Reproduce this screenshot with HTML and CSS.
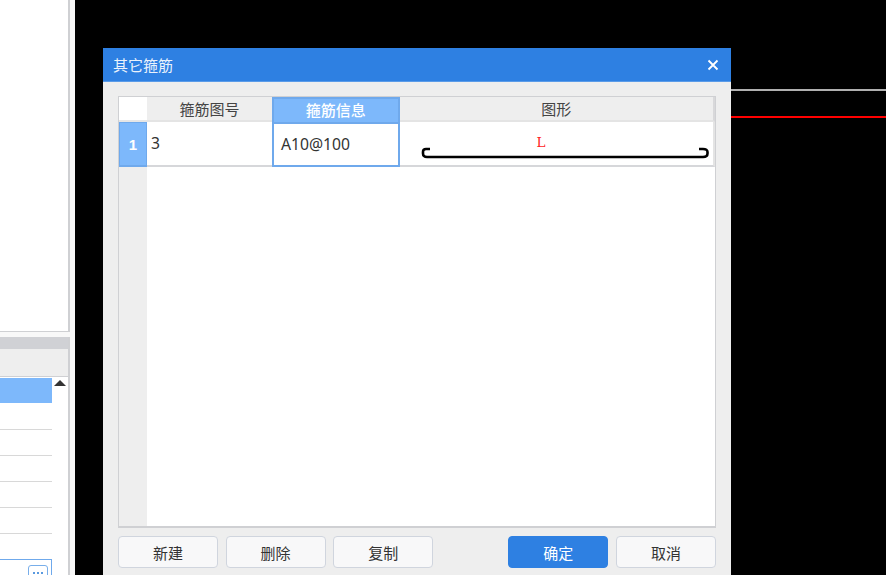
FILE: index.html
```html
<!DOCTYPE html>
<html lang="zh">
<head>
<meta charset="utf-8">
<title>其它箍筋</title>
<link rel="stylesheet" href="styles.css">
</head>
<body>
<div class="app">
  <aside class="side">
    <div class="side-top"></div>
    <div class="side-bottom">
      <div class="side-title"></div>
      <div class="side-head"></div>
      <div class="side-body">
        <div class="side-list">
          <div class="side-row side-row-active"></div>
          <div class="side-row"></div>
          <div class="side-row"></div>
          <div class="side-row"></div>
          <div class="side-row"></div>
          <div class="side-row"></div>
          <div class="side-row side-row-plain"></div>
          <div class="side-edit"><span class="more"><i class="dot"></i><i class="dot"></i><i class="dot"></i></span></div>
        </div>
        <div class="side-scroll"><span class="arrow-up"></span></div>
      </div>
    </div>
  </aside>
  <main class="canvas">
    <div class="cad-line cad-gray"></div>
    <div class="cad-line cad-red"></div>
    <section class="dialog">
      <header class="title-bar">
        <span class="title">其它箍筋</span>
        <svg class="close" width="12" height="12" viewBox="0 0 12 12"><path d="M1.500 1.500l9 9M10.500 1.500l-9 9" stroke="#fff" stroke-width="1.800" fill="none"/></svg>
      </header>
      <div class="dialog-body">
        <div class="grid">
          <div class="corner"></div>
          <div class="th">箍筋图号</div>
          <div class="th th-active">箍筋信息</div>
          <div class="th th-last">图形</div>
          <div class="row-no">1</div>
          <div class="td">3</div>
          <div class="td td-active">A10@100</div>
          <div class="td td-shape">
            <span class="shape-label">L</span>
            <svg class="shape" width="290" height="14" viewBox="0 0 290 14"><path d="M9 2H5Q2 2 2 5V6.500Q2 10 6 10H282Q286.500 10 286.500 6.500V5Q286.500 2 282 2H278" stroke="#000" stroke-width="2.600" fill="none"/></svg>
          </div>
          <div class="filler-head"></div>
          <div class="filler"></div>
        </div>
        <div class="actions">
          <button class="btn">新建</button>
          <button class="btn">删除</button>
          <button class="btn">复制</button>
          <span class="spacer"></span>
          <button class="btn btn-primary">确定</button>
          <button class="btn">取消</button>
        </div>
      </div>
    </section>
  </main>
</div>
</body>
</html>
```
FILE: styles.css
```css
* { box-sizing: border-box; }
html, body { margin: 0; height: 100%; overflow: hidden; background: #000; }
body { font-family: "Noto Sans CJK SC", "Liberation Sans", sans-serif; font-size: 15px; color: #333; }
.app { display: flex; width: 886px; height: 575px; }

.side { width: 75px; height: 575px; flex: none; background: #f8f8f8; display: flex; flex-direction: column; padding-right: 5px; }
.side-top { height: 332px; flex: none; background: #fff; border-right: 2px solid #cfd0d3; border-bottom: 1px solid #cfd0d3; }
.side-bottom { flex: 1 1 0; min-height: 0; overflow: hidden; margin-top: 5px; display: flex; flex-direction: column; border-right: 2px solid #cfd0d3; }
.side-title { height: 12px; flex: none; background: #d0d1d5; }
.side-head { height: 28px; flex: none; background: #eeeeee; border-bottom: 1px solid #cfd0d3; }
.side-body { flex: none; height: 198px; display: flex; background: #fff; }
.side-list { width: 52px; flex: none; display: flex; flex-direction: column; }
.side-row { height: 26px; flex: none; border-bottom: 1px solid #d8d8d8; }
.side-row-active { height: 25px; margin: 1px 0; background: #7db8fb; border-bottom: 0; }
.side-row-plain { border-bottom: 0; height: 25px; }
.side-edit { flex: none; height: 30px; border: 1px solid #6fa9ec; border-left: 0; display: flex; justify-content: flex-end; align-items: flex-start; padding: 5px 3px 0 0; }
.more { width: 20px; height: 16px; border: 1px solid #78aeea; border-radius: 3px; display: flex; align-items: center; justify-content: center; gap: 2px; }
.dot { width: 2px; height: 2px; background: #5a9ae0; }
.side-scroll { flex: 1; display: flex; justify-content: center; padding-top: 3px; }
.arrow-up { width: 0; height: 0; border-left: 6px solid transparent; border-right: 6px solid transparent; border-bottom: 6px solid #333; }

.canvas { flex: 1; position: relative; background: #000; }
.cad-line { position: absolute; right: 0; width: 155px; height: 2px; }
.cad-gray { top: 89px; background: #b0b0b0; }
.cad-red { top: 116px; background: #f00; }

.dialog { position: absolute; left: 28px; top: 48px; width: 628px; height: 527px; background: #eeeeee; display: flex; flex-direction: column; }
.title-bar { height: 34px; flex: none; background: #2e80e2; border-bottom: 1px solid #5a9be8; color: #fff; display: flex; align-items: center; justify-content: space-between; padding: 0 12px 0 10px; }
.title { font-size: 15px; opacity: .9; }
.dialog-body { flex: 1; display: flex; flex-direction: column; padding: 14px 15px 7px; }

.grid { height: 432px; flex: none; border: 1px solid #cfd0d3; border-bottom-width: 2px; background: #fff; display: grid; grid-template-columns: 28px 125px 127.500px 1fr; grid-template-rows: 25px 45px 1fr; }
.corner { background: #fff; border-bottom: 2px solid #e6e6e6; }
.th { background: #eeeeee; border-bottom: 2px solid #e4e4e4; text-align: center; line-height: 24px; font-size: 15px; color: #444; }
.th-active { background: #7db8fb; color: #fff; border: 2px solid #6fa9ec; border-bottom: 0; line-height: 22px; font-weight: 500; }
.th-last { border-right: 2px solid #d8d8da; }
.row-no { background: #7db8fb; color: #fff; font-weight: 700; font-family: "Liberation Sans", sans-serif; font-size: 15px; display: flex; align-items: center; justify-content: center; border: 1px solid #6fa9ec; border-bottom: 2px solid #6fa9ec; }
.td { background: #fff; border-bottom: 2px solid #d6d7da; padding: 0 0 1px 4px; font-size: 15.700px; color: #333; display: flex; align-items: center; font-family: "Noto Sans", sans-serif; }
.td-active { border: 2px solid #6fa9ec; padding: 0 0 2px 7px; }
.td-shape { position: relative; padding: 0; border-right: 2px solid #e4e4e4; display: block; }
.shape-label { position: absolute; left: 137px; top: 10px; color: #f22; font: 13.500px/20px "DejaVu Serif", serif; }
.shape { position: absolute; left: 21px; top: 25px; }
.filler-head { background: #eeeeee; }
.filler { grid-column: 2 / 5; background: #fff; }

.actions { display: flex; gap: 7.600px; margin-top: 8px; height: 32px; }
.btn { width: 100px; flex: none; height: 32px; border: 1px solid #d0d5de; border-radius: 4px; background: #f8f8f9; color: #333; font: 15px "Noto Sans CJK SC", sans-serif; padding: 0; }
.btn-primary { background: #2e80e2; border-color: #2e80e2; color: #fff; }
.spacer { width: 60px; flex: none; }
```
